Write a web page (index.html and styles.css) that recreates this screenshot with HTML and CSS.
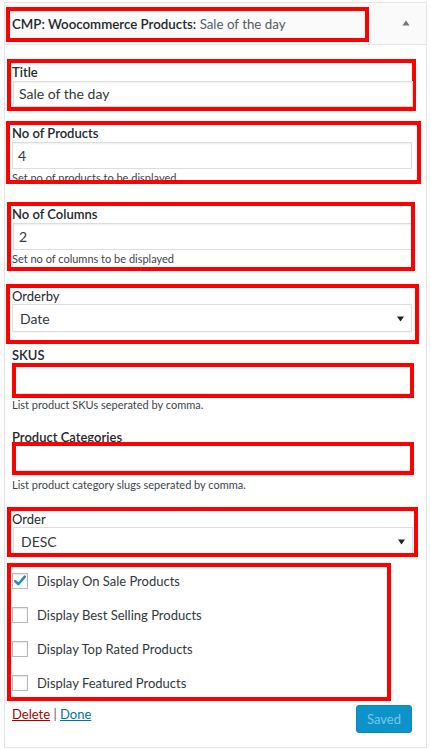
FILE: index.html
```html
<!DOCTYPE html>
<html lang="en">
<head>
<meta charset="utf-8">
<title>CMP: Woocommerce Products widget</title>
<link rel="stylesheet" href="styles.css">
</head>
<body>
<div class="widget">
  <div class="widget-top">
    <div class="mark mark-head">
      <span class="wt-strong">CMP: Woocommerce Products:</span> <span class="wt-light">Sale of the day</span>
    </div>
    <svg class="toggle" width="8" height="6" viewBox="0 0 8 6"><path d="M4 0.5 L7.6 5.5 L0.4 5.5 Z" fill="#72777c"/></svg>
  </div>
  <div class="widget-body">
    <div class="mark box-title pl1">
      <div class="lbl strong">Title</div>
      <div class="input ml1">Sale of the day</div>
    </div>

    <div class="mark box-products pl2">
      <div class="lbl strong">No of Products</div>
      <div class="input input-27">4</div>
      <div class="desc desc-clip">Set no of products to be displayed</div>
    </div>

    <div class="mark box-columns pl1">
      <div class="lbl strong">No of Columns</div>
      <div class="input input-27 ml1">2</div>
      <div class="desc desc-cols">Set no of columns to be displayed</div>
    </div>

    <div class="mark box-orderby pl2">
      <div class="lbl lbl-16">Orderby</div>
      <div class="select">
        <span>Date</span>
        <svg width="7" height="6" viewBox="0 0 7 6"><path d="M0 0.5 L7 0.5 L3.5 5.5 Z" fill="#222"/></svg>
      </div>
    </div>

    <div class="lbl strong lbl-sku">SKUS</div>
    <div class="mark box-field"><div class="field-inner"></div></div>
    <div class="desc desc-line">List product SKUs seperated by comma.</div>

    <div class="lbl strong lbl-cat">Product Categories</div>
    <div class="mark box-field box-field-cat"><div class="field-inner"></div></div>
    <div class="desc desc-line desc-cat">List product category slugs seperated by comma.</div>

    <div class="mark box-order pl1">
      <div class="lbl lbl-16">Order</div>
      <div class="select ml1">
        <span>DESC</span>
        <svg width="7" height="6" viewBox="0 0 7 6"><path d="M0 0.5 L7 0.5 L3.5 5.5 Z" fill="#222"/></svg>
      </div>
    </div>

    <div class="mark box-checks pl1">
      <label class="check-row">
        <span class="cb">
          <svg width="16" height="16" viewBox="0 0 16 16"><path d="M3.2 8.2 L6.3 11.2 L12.8 3.6" fill="none" stroke="#1e8cbe" stroke-width="2.4" stroke-linecap="round" stroke-linejoin="round"/></svg>
        </span>
        <span>Display On Sale Products</span>
      </label>
      <label class="check-row"><span class="cb"></span><span>Display Best Selling Products</span></label>
      <label class="check-row"><span class="cb"></span><span>Display Top Rated Products</span></label>
      <label class="check-row"><span class="cb"></span><span>Display Featured Products</span></label>
    </div>

    <div class="actions">
      <div class="links"><a class="del" href="#">Delete</a> <span class="sep">|</span> <a class="done" href="#">Done</a></div>
      <button class="saved" type="button">Saved</button>
    </div>
  </div>
</div>
</body>
</html>
```
FILE: styles.css
```css
* { box-sizing: border-box; }
html, body { margin: 0; padding: 0; background: #fff; }
body {
  font-family: Lato, "Liberation Sans", sans-serif;
  font-size: 13px;
  color: #32373c;
}
.widget {
  margin: 2px 0 0 4px;
  width: 423px;
  height: 746px;
  border: 1px solid #e5e5e5;
  background: #fff;
}
.widget-top {
  height: 42px;
  background: #fafafa;
  border-bottom: 1px solid #e5e5e5;
  display: flex;
  align-items: flex-start;
}
.mark { border: 4px solid #ff0000; position: relative; }
.mark-head {
  margin: 4px 0 0 1px;
  width: 363px;
  height: 35px;
  padding-left: 2px;
  line-height: 26px;
  font-size: 13.3px;
  white-space: nowrap;
}
.wt-strong { font-weight: 600; color: #23282d; }
.wt-light { font-weight: 400; color: #555d66; }
.toggle { margin: 17px 16px 0 auto; }

.widget-body {
  display: flex;
  flex-direction: column;
  align-items: flex-start;
}
.pl1 { padding-left: 1px; }
.pl2 { padding-left: 2px; }
.ml1 { margin-left: 1px; }
.lbl { line-height: 18px; color: #23282d; white-space: nowrap; }
.strong { font-weight: 600; }
.lbl-16 { line-height: 16px; }

.input {
  width: 400px;
  height: 26px;
  flex: none;
  border: 1px solid #ddd;
  box-shadow: inset 0 1px 2px rgba(0,0,0,.07);
  background: #fff;
  padding: 0 5px;
  font-size: 14px;
  line-height: 24px;
  color: #32373c;
}
.input-27 { height: 27px; line-height: 25px; }
.desc { font-size: 11px; color: #3c434a; white-space: nowrap; }

.box-title { margin: 14px 0 0 2px; width: 409px; height: 52px; }
.box-products { margin: 10px 0 0 1px; width: 415px; height: 63px; overflow: hidden; }
.box-products .lbl { line-height: 17px; }
.desc-clip { margin-top: 2px; line-height: 14px; }
.box-columns { margin: 18px 0 0 2px; width: 408px; height: 69px; overflow: hidden; }
.box-columns .lbl { line-height: 17px; }
.desc-cols { line-height: 17px; }
.box-orderby { margin: 13px 0 0 1px; width: 413px; height: 60px; }

.select {
  width: 400px;
  height: 28px;
  border: 1px solid #ddd;
  box-shadow: 0 1px 1px rgba(0,0,0,.04);
  background: #fff;
  display: flex;
  align-items: center;
  justify-content: space-between;
  padding: 0 7px 0 7px;
  font-size: 14px;
  color: #32373c;
  flex: none;
}
.select svg { margin-top: 1px; }

.lbl-sku { margin: 4px 0 0 7px; line-height: 15px; }
.box-field { margin: 0 0 0 7px; width: 402px; height: 35px; }
.field-inner { height: 100%; border-bottom: 1px solid #e2e2e2; margin-right: 0; background: #fff; }
.box-field-cat { height: 33px; margin-top: -3px; }
.lbl-cat { margin: 18px 0 0 7px; line-height: 15px; }
.desc-line { margin-left: 7px; line-height: 14px; }
.desc-cat { margin-top: 3px; }

.box-order { margin: 15px 0 0 2px; width: 411px; height: 50px; overflow: hidden; }
.box-order .select { height: 28px; }

.box-checks {
  margin: 6px 0 0 2px;
  width: 384px;
  display: flex;
  flex-direction: column;
  gap: 6px;
}
.check-row {
  display: flex;
  align-items: center;
  height: 28px;
  white-space: nowrap;
  color: #32373c;
}
.cb {
  width: 16px;
  height: 16px;
  border: 1px solid #b4b9be;
  background: #fff;
  box-shadow: inset 0 1px 2px rgba(0,0,0,.1);
  margin-right: 9px;
  display: flex;
  align-items: center;
  justify-content: center;
  flex: none;
}
.cb svg { margin: -1px; }

.actions {
  margin: 4px 0 0 7px;
  width: 400px;
  display: flex;
  justify-content: space-between;
  align-items: flex-start;
}
.links { line-height: 18px; color: #72777c; }
.del { color: #a00; }
.done { color: #0073aa; }
.sep { color: #655; }
.saved {
  width: 56px;
  height: 28px;
  border: 1px solid #0a86b8;
  border-radius: 3px;
  background: #0c93c9;
  color: #7cc6e6;
  font-family: Lato, "Liberation Sans", sans-serif;
  font-size: 13px;
  padding: 0;
}
```
